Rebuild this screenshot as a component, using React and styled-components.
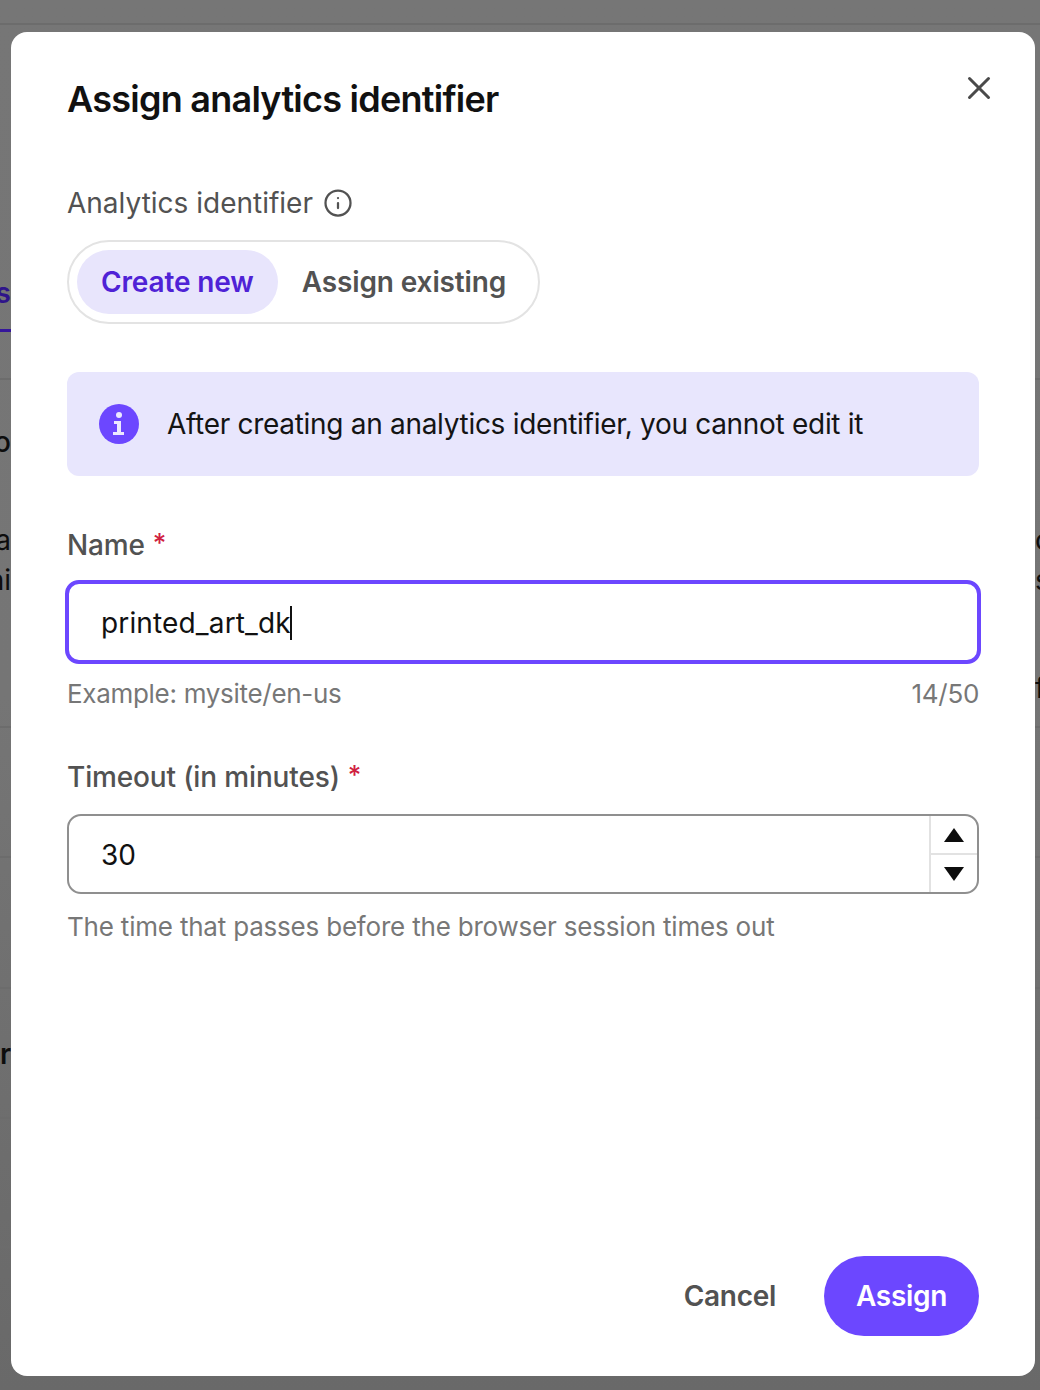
import React from "react";
import styled, { createGlobalStyle } from "styled-components";
import { X, Info } from "lucide-react";

const Global = createGlobalStyle`
  html, body { margin: 0; padding: 0; background: #707070; }
  * { box-sizing: border-box; }
`;

const Screen = styled.div`
  position: relative;
  width: 1040px;
  height: 1390px;
  overflow: hidden;
  display: flex;
  font-family: Inter, "Liberation Sans", sans-serif;
`;

/* the dimmed page that shows behind the dialog */
const Backdrop = styled.div`
  position: absolute;
  inset: 0;
  display: flex;
  flex-direction: column;
  background: linear-gradient(#767676, #757575 50%, #696969);
  color: #0d0d0d;
  font-size: 28px;
  line-height: 40px;
`;

const Band = styled.div`
  height: ${(p) => p.$h}px;
  flex: none;
  display: flex;
  justify-content: space-between;
  border-bottom: 2px solid ${(p) => (p.$plain ? "transparent" : "#6c6c6c")};
`;

const Tab = styled.div`
  width: 11px;
  height: 307px;
  display: flex;
  justify-content: flex-end;
  align-items: flex-end;
  padding-bottom: 16px;
  color: #2f148a;
  font-weight: 600;
  border-bottom: 3px solid #35169b;
`;

const Sliver = styled.div`
  display: flex;
  flex-direction: column;
  width: ${(p) => (p.$right ? 5 : 11)}px;
  align-items: ${(p) => (p.$right ? "flex-start" : "flex-end")};
`;

const Scrap = styled.span`
  margin-top: ${(p) => p.$top || 0}px;
  white-space: nowrap;
  font-weight: ${(p) => p.$weight || 400};
`;

const Dialog = styled.div`
  position: relative;
  width: 1024px;
  height: 1344px;
  margin: 32px 0 0 11px;
  padding: 0 56px 40px;
  display: flex;
  flex-direction: column;
  background: #fff;
  border-radius: 16px;
`;

const Head = styled.div`
  display: flex;
  justify-content: space-between;
  align-items: flex-start;
  height: 151px;
  padding-top: 45px;
`;

const Title = styled.h2`
  margin: 0;
  font-size: 36px;
  line-height: 44px;
  font-weight: 600;
  letter-spacing: -0.75px;
  color: #111;
`;

const Close = styled.button`
  display: flex;
  padding: 0;
  margin: -8px -19px 0 0;
  border: 0;
  background: none;
  color: #4a4a4a;
`;

const Label = styled.div`
  display: flex;
  align-items: center;
  gap: ${(p) => p.$gap || 0}px;
  height: 40px;
  margin-top: ${(p) => p.$top || 0}px;
  font-size: 28px;
  letter-spacing: ${(p) => (p.$strong ? -0.15 : 0)}px;
  color: #525252;
  font-weight: ${(p) => (p.$strong ? 500 : 400)};
`;

const Star = styled.span`
  color: #d0213f;
  font-size: 26px;
  margin-left: 8px;
  margin-top: -6px;
`;

const Segments = styled.div`
  align-self: flex-start;
  display: flex;
  align-items: center;
  width: 473px;
  height: 84px;
  margin-top: 17px;
  padding: 0 8px;
  border: 2px solid #e3e3e3;
  border-radius: 42px;
`;

const Segment = styled.div`
  height: 64px;
  padding: 0 24px;
  display: flex;
  align-items: center;
  white-space: nowrap;
  border-radius: 32px;
  font-size: 28px;
  font-weight: 600;
  letter-spacing: -0.13px;
  background: ${(p) => (p.$active ? "#e8e5fc" : "transparent")};
  color: ${(p) => (p.$active ? "#4f22d6" : "#525252")};
`;

const Alert = styled.div`
  display: flex;
  align-items: center;
  gap: 28px;
  height: 104px;
  margin-top: 48px;
  padding-left: 32px;
  background: #e8e6fd;
  border-radius: 12px;
  font-size: 28px;
  letter-spacing: -0.3px;
  color: #141414;
`;

const AlertDot = styled.span`
  width: 40px;
  height: 40px;
  display: flex;
  align-items: center;
  justify-content: center;
  border-radius: 50%;
  background: #6c47ff;
`;

const Field = styled.div`
  display: flex;
  align-items: center;
  height: 84px;
  margin: 15px -2px 0;
  padding: 2px 0 0 32px;
  background: #fff;
  border: 4px solid #6c47ff;
  border-radius: 14px;
  font-size: 28px;
  letter-spacing: 0.15px;
  color: #111;
`;

const Caret = styled.span`
  width: 2px;
  height: 34px;
  margin-left: -1px;
  background: #111;
`;

const Hints = styled.div`
  display: flex;
  justify-content: space-between;
  align-items: center;
  height: 34px;
  margin-top: ${(p) => p.$top}px;
  font-size: 26px;
  letter-spacing: ${(p) => p.$track}px;
  color: #777;
`;

const NumberBox = styled.div`
  display: flex;
  height: 80px;
  margin-top: 17px;
  border: 2px solid #8f8f8f;
  border-radius: 14px;
  font-size: 28px;
  color: #111;
`;

const NumberValue = styled.div`
  flex: 1;
  display: flex;
  align-items: center;
  padding: 2px 0 0 32px;
`;

const Spinner = styled.div`
  width: 48px;
  display: flex;
  flex-direction: column;
  border-left: 2px solid #e2e2e2;
`;

const Step = styled.div`
  flex: 1;
  display: flex;
  align-items: center;
  justify-content: center;
  border-top: ${(p) => (p.$lower ? "2px solid #e2e2e2" : "0")};
`;

const Footer = styled.div`
  margin-top: auto;
  display: flex;
  justify-content: flex-end;
  align-items: center;
  gap: 48px;
`;

const Cancel = styled.button`
  padding: 0;
  border: 0;
  background: none;
  font: 600 28px Inter, sans-serif;
  letter-spacing: -0.3px;
  color: #525252;
`;

const Primary = styled.button`
  width: 155px;
  height: 80px;
  border: 0;
  border-radius: 40px;
  background: #6c47ff;
  color: #fff;
  font: 600 28px Inter, sans-serif;
  letter-spacing: -0.3px;
`;

const Arrow = ({ down }) => (
  <svg width="20" height="14" viewBox="0 0 20 14">
    <path d={down ? "M0 0h20L10 14z" : "M0 14h20L10 0z"} fill="#0d0d0d" />
  </svg>
);

export default function App() {
  return (
    <Screen>
      <Global />
      <Backdrop>
        <Band $h={25} />
        <Band $h={307} $plain>
          <Tab>s</Tab>
        </Band>
        <Band $h={48} />
        <Band $h={348}>
          <Sliver>
            <Scrap $top={42} $weight={500}>o</Scrap>
            <Scrap $top={58}>ra</Scrap>
            <Scrap>hi</Scrap>
          </Sliver>
          <Sliver $right>
            <Scrap $top={140}>c</Scrap>
            <Scrap>s</Scrap>
            <Scrap $top={68}>f</Scrap>
          </Sliver>
        </Band>
        <Band $h={130} />
        <Band $h={131} />
        <Band $h={130}>
          <Sliver>
            <Scrap $top={45} $weight={600}>r</Scrap>
          </Sliver>
        </Band>
        <Band $h={129} />
      </Backdrop>

      <Dialog>
        <Head>
          <Title>Assign analytics identifier</Title>
          <Close aria-label="Close">
            <X size={38} strokeWidth={1.9} />
          </Close>
        </Head>

        <Label $gap={10}>
          Analytics identifier
          <Info size={30} strokeWidth={1.8} />
        </Label>
        <Segments>
          <Segment $active>Create new</Segment>
          <Segment>Assign existing</Segment>
        </Segments>

        <Alert>
          <AlertDot>
            <svg width="14" height="24" viewBox="0 0 14 24">
              <circle cx="7" cy="3" r="3" fill="#ece9ff" />
              <path d="M2 9h7v11h3v3H1v-3h4v-8H2z" fill="#ece9ff" />
            </svg>
          </AlertDot>
          After creating an analytics identifier, you cannot edit it
        </Alert>

        <Label $strong $top={49}>
          Name<Star>*</Star>
        </Label>
        <Field>
          printed_art_dk
          <Caret />
        </Field>
        <Hints $top={12} $track={-0.3}>
          <span>Example: mysite/en-us</span>
          <span>14/50</span>
        </Hints>

        <Label $strong $top={47}>
          Timeout (in minutes)<Star>*</Star>
        </Label>
        <NumberBox>
          <NumberValue>30</NumberValue>
          <Spinner>
            <Step>
              <Arrow />
            </Step>
            <Step $lower>
              <Arrow down />
            </Step>
          </Spinner>
        </NumberBox>
        <Hints $top={15} $track={-0.2}>
          <span>The time that passes before the browser session times out</span>
        </Hints>

        <Footer>
          <Cancel>Cancel</Cancel>
          <Primary>Assign</Primary>
        </Footer>
      </Dialog>
    </Screen>
  );
}
